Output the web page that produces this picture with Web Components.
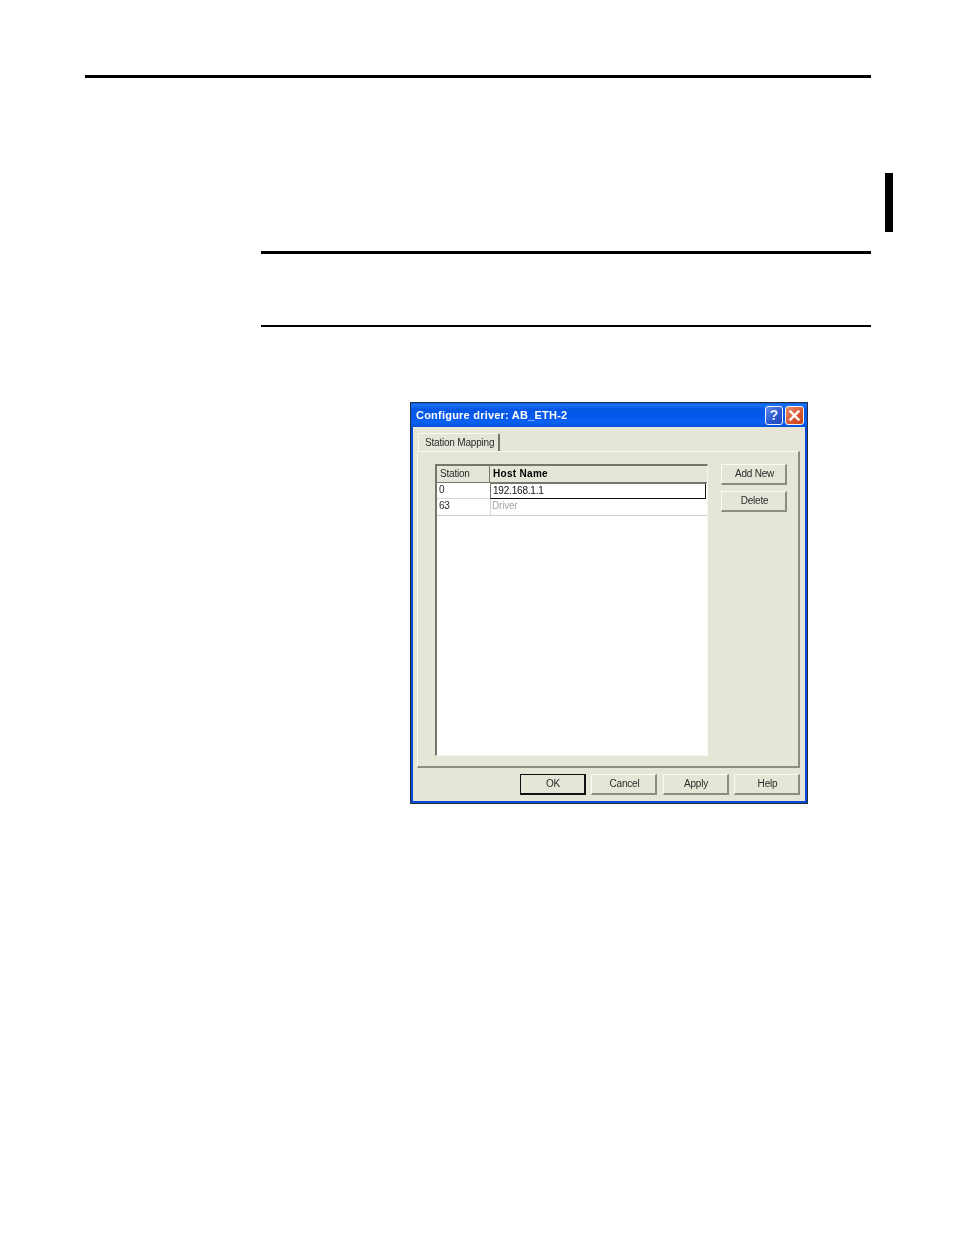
<!DOCTYPE html>
<html>
<head>
<meta charset="utf-8">
<title>Configure driver</title>
<style>
  html, body { margin: 0; padding: 0; background: #fff; }
  body { width: 954px; height: 1235px; overflow: hidden; font-family: "Liberation Sans", Arial, sans-serif; }
  manual-page { display: block; }
</style>
</head>
<body>
<manual-page>
  <page-rule left="85" width="786" height="3" top="75"></page-rule>
  <page-rule left="885" width="8" height="59" top="95"></page-rule>
  <page-rule left="261" width="610" height="3" top="19"></page-rule>
  <page-rule left="261" width="610" height="2" top="71"></page-rule>
  <xp-dialog heading="Configure driver: AB_ETH-2" tab="Station Mapping">
    <station-grid></station-grid>
    <xp-button slot="side">Add New</xp-button>
    <xp-button slot="side">Delete</xp-button>
    <xp-button slot="footer" default>OK</xp-button>
    <xp-button slot="footer">Cancel</xp-button>
    <xp-button slot="footer">Apply</xp-button>
    <xp-button slot="footer">Help</xp-button>
  </xp-dialog>
</manual-page>

<script>
// Page wrapper, everything sits in normal flow
class ManualPage extends HTMLElement {
  constructor() {
    super();
    this.attachShadow({ mode: 'open' });
  }
  connectedCallback() {
    this.shadowRoot.innerHTML = `
    <style>
      :host { display: block; width: 954px; height: 1235px; overflow: hidden; }
      .flow { display: flow-root; }
    </style>
    <div class="flow"><slot></slot></div>`;
  }
}

// Black bars of the printed page
class PageRule extends HTMLElement {
  constructor() {
    super();
    this.attachShadow({ mode: 'open' });
  }
  connectedCallback() {
    const left = this.getAttribute('left');
    const width = this.getAttribute('width');
    const height = this.getAttribute('height');
    const top = this.getAttribute('top');
    this.shadowRoot.innerHTML = `
    <style>
      :host {
        display: block;
        margin: ${top}px 0 0 ${left}px;
        width: ${width}px;
        height: ${height}px;
        background: #000;
      }
    </style>`;
  }
}

class XpButton extends HTMLElement {
  constructor() {
    super();
    this.attachShadow({ mode: 'open' });
  }
  connectedCallback() {
    const isDefault = this.hasAttribute('default');
    this.shadowRoot.innerHTML = `
    <style>
      :host { display: block; width: 66px; height: 21px; box-sizing: border-box; }
      .btn {
        box-sizing: border-box;
        height: 100%;
        display: flex;
        align-items: center;
        justify-content: center;
        padding: 0 0 1px 2px;
        background: #e6e6d8;
        color: #2a2a2a;
        font: 10px "Liberation Sans", Arial, sans-serif;
        letter-spacing: -.2px;
        border-style: solid;
        border-width: 1px 2px 2px 1px;
        border-color: #fbfbf6 #8d8c80 #8d8c80 #fbfbf6;
      }
      .btn.default {
        border-width: 1px 2px 2px 1px;
        border-color: #111;
      }
    </style>
    <div class="btn ${isDefault ? 'default' : ''}"><slot></slot></div>`;
  }
}

// The station table inside the dialog
class StationGrid extends HTMLElement {
  constructor() {
    super();
    this.attachShadow({ mode: 'open' });
  }
  connectedCallback() {
    this.shadowRoot.innerHTML = `
    <style>
      :host {
        display: block;
        box-sizing: border-box;
        width: 273px;
        height: 292px;
        background: #fff;
        border-style: solid;
        border-width: 2px 1px 1px 2px;
        border-color: #77766a #f6f6ee #f6f6ee #77766a;
        font: 10px "Liberation Sans", Arial, sans-serif;
        letter-spacing: -.2px;
        color: #2a2a2a;
      }
      .grid {
        display: grid;
        grid-template-columns: 53px 217px;
        grid-template-rows: 17px 16px 17px;
      }
      .cell {
        box-sizing: border-box;
        display: flex;
        align-items: center;
        padding-left: 3px;
        white-space: nowrap;
      }
      .head { background: #e6e6d8; padding-bottom: 2px; }
      .head.station { border-right: 1px solid #77766a; border-bottom: 1px solid #77766a; }
      .head.host {
        border-bottom: 1px solid #77766a;
        font-weight: bold;
        letter-spacing: .3px;
        color: #000;
      }
      .no { padding-left: 2px; padding-bottom: 3px; }
      .row0 { border-bottom: 1px solid #d8d8d0; }
      .selected { border: 1px solid #111; border-left-color: #77766a; border-top-color: #77766a; margin-right: 1px; color: #111; padding-left: 2px; padding-bottom: 2px; }
      .row1 { border-bottom: 1px solid #d0d0c8; }
      .dim { color: #a6a6a0; padding: 0 0 3px 1px; border-left: 1px solid #d0d0c8; }
    </style>
    <div class="grid">
      <div class="cell head station">Station</div>
      <div class="cell head host">Host Name</div>
      <div class="cell no row0">0</div>
      <div class="cell selected">192.168.1.1</div>
      <div class="cell no row1">63</div>
      <div class="cell row1 dim">Driver</div>
    </div>`;
  }
}

class XpDialog extends HTMLElement {
  constructor() {
    super();
    this.attachShadow({ mode: 'open' });
  }
  connectedCallback() {
    const heading = this.getAttribute('heading');
    const tab = this.getAttribute('tab');
    this.shadowRoot.innerHTML = `
    <style>
      :host {
        display: block;
        box-sizing: border-box;
        width: 398px;
        height: 402px;
        margin: 75px 0 0 410px;
        border: 1px solid #26303f;
        font: 10px "Liberation Sans", Arial, sans-serif;
        letter-spacing: -.2px;
      }
      .frame {
        box-sizing: border-box;
        height: 100%;
        display: flex;
        flex-direction: column;
        background: #e6e6d8;
        border: 2px solid #0a48d6;
        border-top: 0;
        filter: blur(.3px);
      }
      .title {
        flex: none;
        height: 24px;
        margin: 0 -2px;
        display: flex;
        align-items: center;
        gap: 2px;
        padding: 0 3px 0 5px;
        background: linear-gradient(#0658e0, #1c74f2 8%, #0557e4 26%, #0558ec 60%, #0a62f4 78%, #0452d8 100%);
      }
      .title-text {
        flex: 1;
        color: #fff;
        font-weight: bold;
        font-size: 11px;
        letter-spacing: .22px;
        white-space: nowrap;
      }
      .win-btn {
        box-sizing: border-box;
        width: 18px;
        height: 19px;
        border: 1px solid #f2f4fa;
        border-radius: 3px;
        display: flex;
        align-items: center;
        justify-content: center;
      }
      .help {
        background: linear-gradient(135deg, #5f8cec, #2a55cc 60%, #2048bc);
        color: #eef2fc;
        font: bold 14px "Liberation Sans", Arial, sans-serif;
      }
      .close { width: 19px; background: linear-gradient(135deg, #ea8e6c, #d95a34 55%, #c8431f); }
      .body {
        flex: 1;
        min-height: 0;
        display: flex;
        flex-direction: column;
        padding: 6px 5px 0 4px;
      }
      .tab {
        flex: none;
        box-sizing: border-box;
        width: 82px;
        height: 18px;
        margin-left: 1px;
        display: flex;
        align-items: center;
        padding: 0 0 1px 6px;
        white-space: nowrap;
        color: #2a2a2a;
        border-left: 1px solid #fbfbf6;
        border-top: 1px solid #fbfbf6;
        border-right: 2px solid #77766a;
        border-radius: 2px 2px 0 0;
      }
      .panel {
        flex: none;
        box-sizing: border-box;
        width: 383px;
        height: 317px;
        display: flex;
        gap: 13px;
        padding: 12px 0 0 17px;
        border-style: solid;
        border-width: 1px 2px 2px 1px;
        border-color: #fbfbf6 #8d8c80 #8d8c80 #fbfbf6;
      }
      .side { display: flex; flex-direction: column; gap: 6px; }
      .footer {
        display: flex;
        justify-content: flex-end;
        gap: 5.5px;
        padding-top: 6px;
        width: 383px;
      }
    </style>
    <div class="frame">
      <div class="title">
        <div class="title-text">${heading}</div>
        <div class="win-btn help">?</div>
        <div class="win-btn close">
          <svg width="11" height="11" viewBox="0 0 11 11"><path d="M1.5 1.5 9.5 9.5M9.5 1.5 1.5 9.5" stroke="#fff" stroke-width="2.4" stroke-linecap="square"/></svg>
        </div>
      </div>
      <div class="body">
        <div class="tab">${tab}</div>
        <div class="panel">
          <slot></slot>
          <div class="side"><slot name="side"></slot></div>
        </div>
        <div class="footer"><slot name="footer"></slot></div>
      </div>
    </div>`;
  }
}

customElements.define('manual-page', ManualPage);
customElements.define('page-rule', PageRule);
customElements.define('xp-button', XpButton);
customElements.define('station-grid', StationGrid);
customElements.define('xp-dialog', XpDialog);
</script>
</body>
</html>
